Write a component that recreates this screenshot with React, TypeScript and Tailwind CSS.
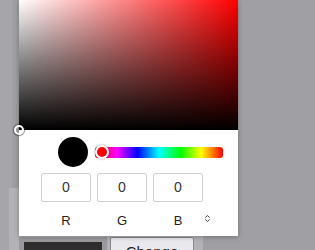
import { ChevronsUpDown } from 'lucide-react'

const channels = [
  { label: 'R', value: 0 },
  { label: 'G', value: 0 },
  { label: 'B', value: 0 },
]

export default function App() {
  return (
    <div
      className="relative w-[315px] h-[250px] overflow-hidden bg-[#a09fa3]"
      style={{ fontFamily: '"Liberation Sans", Arial, sans-serif' }}
    >
      {/* page behind the picker */}
      <div className="flex h-full">
        <div className="w-[12px] h-full bg-[#a6a5a9]" />
        <div className="flex flex-col">
          <div className="h-[188px] shrink-0" />
          <div className="ml-[-3px] w-[194px] h-[62px] shrink-0 overflow-hidden bg-[#b3b2b6] pl-[10px] pt-[49px]">
            <div className="flex gap-[3px]">
              <div className="w-[88px] h-[24px] border-[5px] border-b-0 border-[#9a999c] bg-[#2e2e2e]" />
              <button className="w-[84px] h-[24px] border border-[#8c8b8f] bg-[#e9e8ec] text-[15px] text-[#222] leading-none pt-[6px] flex justify-center items-start rounded-t-[2px]">
                Change
              </button>
            </div>
          </div>
        </div>
      </div>

      {/* picker popover */}
      <div className="absolute left-[19px] top-0 w-[219px] h-[236px] bg-white shadow-[0_1px_5px_rgba(0,0,0,0.3)]">
        <div className="relative h-[130px] bg-[#ff0000]">
          <div className="absolute inset-0 bg-gradient-to-r from-white to-transparent" />
          <div className="absolute inset-0 bg-gradient-to-t from-black to-transparent" />
          <div className="absolute left-[-5px] bottom-[-5px] w-[10px] h-[10px] rounded-full border-2 border-white shadow-[0_0_1px_1px_rgba(0,0,0,0.5)]" />
        </div>

        <div className="flex items-center pl-[39px] pt-[7px]">
          <div className="w-[30px] h-[30px] rounded-full bg-black" />
          <div className="relative ml-[7px] w-[128px] h-[11px] rounded-[3px] bg-[linear-gradient(to_right,#f00_0%,#f0f_17%,#00f_33%,#0ff_50%,#0f0_67%,#ff0_83%,#f00_100%)]">
            <div className="absolute left-0 top-[-2px] w-[14px] h-[14px] rounded-full bg-[#f00] border-2 border-white shadow-[0_0_2px_rgba(0,0,0,0.5)]" />
          </div>
        </div>

        <div className="flex gap-[6px] pl-[22px] pt-[6px]">
          {channels.map(c => (
            <div key={c.label} className="flex flex-col items-center w-[50px]">
              <div className="w-[50px] h-[29px] border border-[#d0d0d0] rounded-[2px] flex items-center justify-center text-[14px] text-[#333]">
                {c.value}
              </div>
              <span className="mt-[9px] text-[13px] text-[#222]">{c.label}</span>
            </div>
          ))}
          <div className="pt-[41px] ml-[-6px]">
            <ChevronsUpDown size={9} strokeWidth={2.5} className="text-[#333]" />
          </div>
        </div>
      </div>
    </div>
  )
}
